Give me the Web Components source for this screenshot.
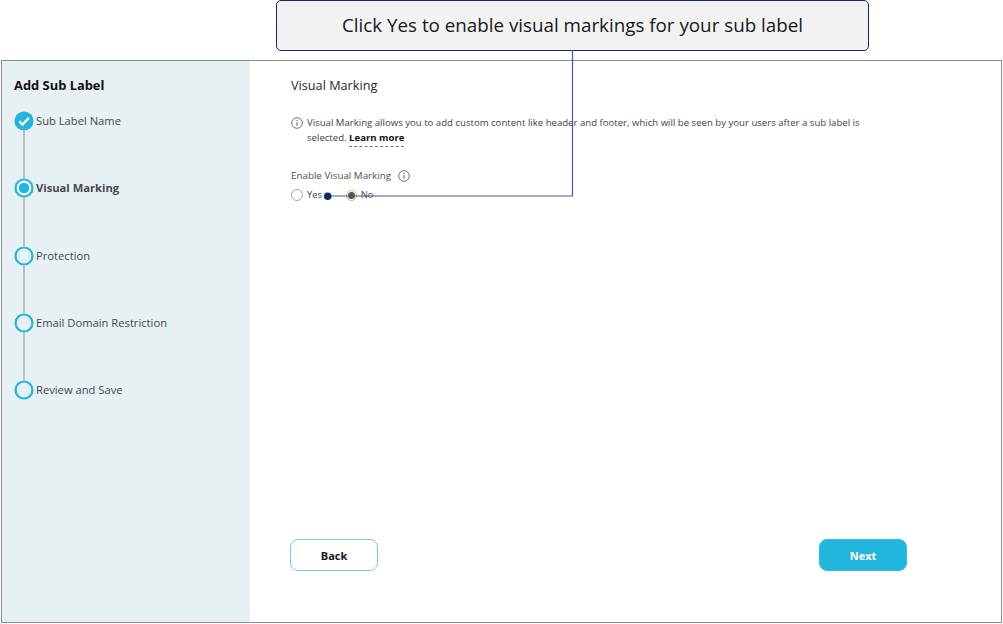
<!DOCTYPE html>
<html>
<head>
<meta charset="utf-8">
<title>Add Sub Label</title>
<style>
  html, body { margin: 0; height: 100%; background: #fff; }
  body { font-family: "Open Sans", "Liberation Sans", sans-serif; color: #3f4347; overflow: hidden; }
</style>
</head>
<body>
<wizard-page>
  <wizard-side slot="side" heading="Add Sub Label">
    <wizard-step state="done">Sub Label Name</wizard-step>
    <wizard-step state="current">Visual Marking</wizard-step>
    <wizard-step>Protection</wizard-step>
    <wizard-step>Email Domain Restriction</wizard-step>
    <wizard-step last>Review and Save</wizard-step>
  </wizard-side>
  <marking-form slot="main"></marking-form>
</wizard-page>
<tip-callout>Click Yes to enable visual markings for your sub label</tip-callout>

<script>
const infoIcon = size => `<svg width="${size}" height="${size}" viewBox="0 0 12 12" fill="none" stroke="#5f6367" stroke-width=".9"><circle cx="6" cy="6" r="5.3"/><path d="M6 5.3v3.4" stroke-width="1.1"/><path d="M6 3v1.1" stroke-width="1.1"/></svg>`;

class WizardPage extends HTMLElement {
  constructor() {
    super();
    this.attachShadow({mode: 'open'}).innerHTML = `
      <style>
        :host { display: block; margin: 60px 0 0 1px; width: 999px; height: 561px; box-sizing: content-box; border: 1px solid #8b8e91; }
        .wrap { display: flex; height: 100%; }
        ::slotted([slot=side]) { flex: 0 0 248px; }
        ::slotted([slot=main]) { flex: 1; }
      </style>
      <div class="wrap"><slot name="side"></slot><slot name="main"></slot></div>`;
  }
}

class WizardSide extends HTMLElement {
  constructor() {
    super();
    this.attachShadow({mode: 'open'}).innerHTML = `
      <style>
        :host { display: block; background: #e7f0f3; padding: 15px 0 0 12px; box-sizing: border-box; }
        h2 { margin: 0 0 16px; font-size: 12.9px; line-height: 19px; font-weight: 700; color: #111; }
        .steps { display: flex; flex-direction: column; }
      </style>
      <h2></h2>
      <div class="steps"><slot></slot></div>`;
    this.shadowRoot.querySelector('h2').textContent = this.getAttribute('heading');
  }
}

class WizardStep extends HTMLElement {
  constructor() {
    super();
    const state = this.getAttribute('state');
    let mark = '<circle cx="10" cy="10" r="8.5" fill="none" stroke="#22b5de" stroke-width="2.2"/>';
    if (state === 'done') mark = '<circle cx="10" cy="10" r="9.6" fill="#22b5de"/><path d="M5.3 10.3l3.2 3.2 6.3-6.6" fill="none" stroke="#fff" stroke-width="2.3"/>';
    if (state === 'current') mark = '<circle cx="10" cy="10" r="8.5" fill="#fff" stroke="#22b5de" stroke-width="2.2"/><circle cx="10" cy="10" r="5.3" fill="#22b5de"/>';
    this.attachShadow({mode: 'open'}).innerHTML = `
      <style>
        :host { display: block; height: 67.25px; }
        :host([last]) { height: 20px; }
        .row { display: flex; align-items: center; gap: 2px; height: 20px; font-size: 11.2px; line-height: 20px; color: #45494d; }
        :host([state=current]) .row { font-weight: 700; }
        svg { display: block; flex: none; }
        .line { width: 2px; height: 47.25px; margin-left: 9px; background: #b9bdbf; }
        :host([last]) .line { display: none; }
      </style>
      <div class="row"><svg width="20" height="20" viewBox="0 0 20 20">${mark}</svg><span><slot></slot></span></div>
      <div class="line"></div>`;
  }
}

class RadioChoice extends HTMLElement {
  constructor() {
    super();
    this.attachShadow({mode: 'open'}).innerHTML = `
      <style>
        :host { display: inline-flex; align-items: center; gap: 4px; font-size: 9.3px; line-height: 14px; color: #3f4347; }
        .dot { width: 10px; height: 10px; border-radius: 50%; border: 1px solid #a3a6a8; background: #fff; box-sizing: content-box; }
        :host([checked]) .dot { width: 9px; height: 9px; border: 1.5px solid #f3b233; display: flex; align-items: center; justify-content: center; }
        :host([checked]) .dot::after { content: ""; width: 7px; height: 7px; border-radius: 50%; background: #4c5566; }
      </style>
      <span class="dot"></span><span><slot></slot></span>`;
  }
}

class WizardButton extends HTMLElement {
  constructor() {
    super();
    this.attachShadow({mode: 'open'}).innerHTML = `
      <style>
        :host { display: flex; align-items: center; justify-content: center; width: 88px; height: 32px; box-sizing: border-box; border-radius: 8px; border: 1.5px solid #6dcfea; font-size: 11px; font-weight: 700; color: #15181b; background: #fff; }
        :host([primary]) { background: #22b5de; border-color: #35bbe0; color: #fff; }
      </style>
      <slot></slot>`;
  }
}

class MarkingForm extends HTMLElement {
  constructor() {
    super();
    this.attachShadow({mode: 'open'}).innerHTML = `
      <style>
        :host { display: flex; flex-direction: column; padding: 15px 94px 51px 41px; box-sizing: border-box; background: #fff; }
        h3 { margin: 0 0 21px; font-size: 12.7px; line-height: 19px; font-weight: 400; color: #26292c; }
        .info { display: flex; gap: 4px; max-width: 580px; font-size: 9.6px; line-height: 14.5px; color: #3f4347; }
        .info svg { flex: none; margin-top: 1px; }
        .info p { margin: 0; }
        b { font-weight: 700; color: #111; border-bottom: 1px dashed #777; padding-bottom: 2px; }
        .field { display: flex; align-items: center; gap: 7px; margin-top: 24px; font-size: 9.8px; line-height: 14px; font-weight: 500; color: #4a4e52; }
        .choices { display: flex; gap: 24px; margin-top: 5px; }
        .actions { display: flex; justify-content: space-between; margin: auto 0 0 -1px; }
      </style>
      <h3>Visual Marking</h3>
      <div class="info">${infoIcon(12)}<p><span>Visual Marking allows you to add custom content like header and footer, which will be seen by your users after a sub label is</span> <span>selected.</span> <b>Learn more</b></p></div>
      <div class="field">Enable Visual Marking ${infoIcon(12)}</div>
      <div class="choices"><radio-choice>Yes</radio-choice><radio-choice checked>No</radio-choice></div>
      <div class="actions"><wizard-button>Back</wizard-button><wizard-button primary>Next</wizard-button></div>`;
  }
}

class TipCallout extends HTMLElement {
  constructor() {
    super();
    // callout lies over the page, its leader runs down to the radio row
    this.attachShadow({mode: 'open'}).innerHTML = `
      <style>
        :host { position: absolute; left: 276px; top: 0; width: 593px; height: 51px; padding-bottom: 2px; box-sizing: border-box; display: flex; align-items: center; justify-content: center; background: #f2f2f2; border: 1px solid #0f2a66; border-radius: 5px; font-size: 18.8px; color: #16181b; }
        svg { position: absolute; left: 50px; top: 49px; overflow: visible; }
      </style>
      <slot></slot>
      <svg width="250" height="150" fill="none"><path d="M245.5 0V146H.5" stroke="#3f5e98" stroke-width="1.2"/><circle cx=".7" cy="146.3" r="3.8" fill="#0f2a66"/></svg>`;
  }
}

customElements.define('wizard-page', WizardPage);
customElements.define('wizard-side', WizardSide);
customElements.define('wizard-step', WizardStep);
customElements.define('radio-choice', RadioChoice);
customElements.define('wizard-button', WizardButton);
customElements.define('marking-form', MarkingForm);
customElements.define('tip-callout', TipCallout);
</script>
</body>
</html>
